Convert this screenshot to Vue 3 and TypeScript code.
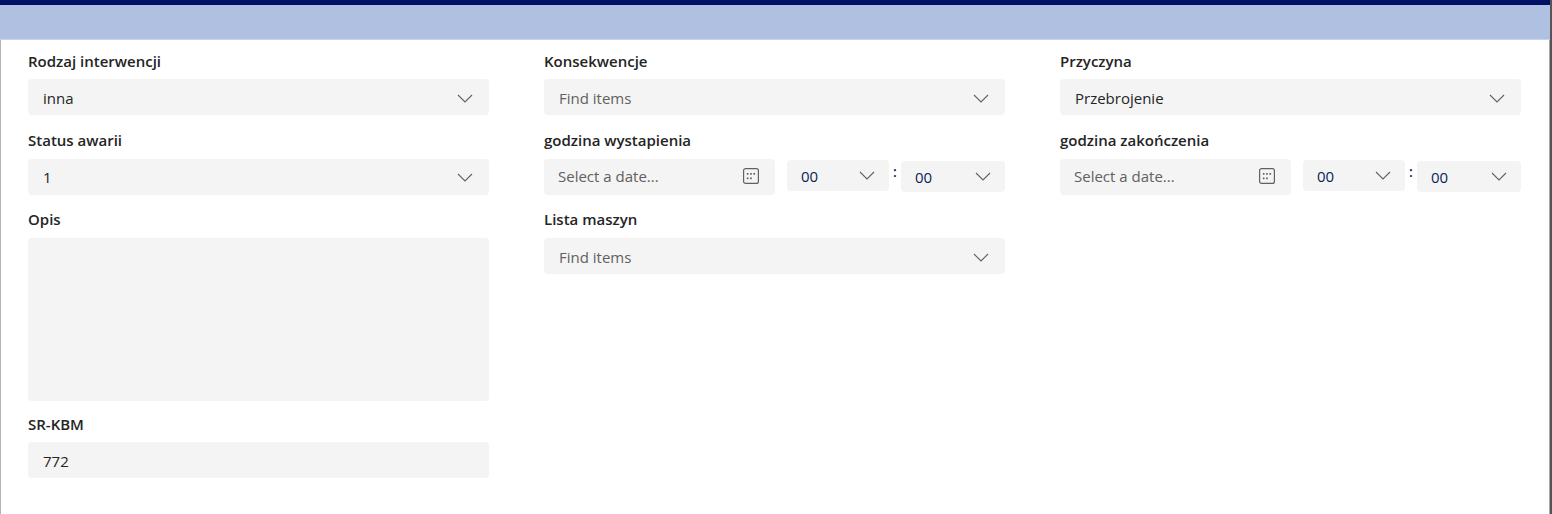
<script setup lang="ts">
interface Field {
  label: string
  value?: string
  placeholder?: string
}

const firstRow: Field[] = [
  { label: 'Rodzaj interwencji', value: 'inna' },
  { label: 'Konsekwencje', placeholder: 'Find items' },
  { label: 'Przyczyna', value: 'Przebrojenie' }
]
</script>

<template>
  <div class="page">
    <header class="topbar" />
    <main class="form">
      <div class="column">
        <div class="field">
          <label>{{ firstRow[0].label }}</label>
          <div class="box low">
            <span class="value">{{ firstRow[0].value }}</span>
            <svg class="chevron" viewBox="0 0 16 9"><path d="M1 1l7 7 7-7" /></svg>
          </div>
        </div>
        <div class="field second">
          <label class="raised">Status awarii</label>
          <div class="box">
            <span class="value">1</span>
            <svg class="chevron" viewBox="0 0 16 9"><path d="M1 1l7 7 7-7" /></svg>
          </div>
        </div>
        <div class="field opis">
          <label class="raised">Opis</label>
          <div class="box textarea" />
        </div>
        <div class="field">
          <label>SR-KBM</label>
          <div class="box low">
            <span class="value">772</span>
          </div>
        </div>
      </div>

      <div class="column">
        <div class="field">
          <label>{{ firstRow[1].label }}</label>
          <div class="box low">
            <span class="placeholder">{{ firstRow[1].placeholder }}</span>
            <svg class="chevron" viewBox="0 0 16 9"><path d="M1 1l7 7 7-7" /></svg>
          </div>
        </div>
        <div class="field second">
          <label class="raised">godzina wystapienia</label>
          <div class="datetime">
            <div class="box date">
              <span class="placeholder">Select a date...</span>
              <svg class="calendar" viewBox="0 0 16 16">
                <rect x="0.6" y="0.6" width="14.8" height="14.8" rx="2" />
                <g class="dots">
                  <rect x="3.8" y="5" width="1.7" height="1.7" />
                  <rect x="7.1" y="5" width="1.7" height="1.7" />
                  <rect x="10.4" y="5" width="1.7" height="1.7" />
                  <rect x="3.8" y="9.5" width="1.7" height="1.7" />
                  <rect x="7.1" y="9.5" width="1.7" height="1.7" />
                </g>
              </svg>
            </div>
            <div class="box time hour">
              <span class="value num">00</span>
              <svg class="chevron" viewBox="0 0 16 9"><path d="M1 1l7 7 7-7" /></svg>
            </div>
            <span class="colon">:</span>
            <div class="box time minute">
              <span class="value num">00</span>
              <svg class="chevron" viewBox="0 0 16 9"><path d="M1 1l7 7 7-7" /></svg>
            </div>
          </div>
        </div>
        <div class="field">
          <label class="raised">Lista maszyn</label>
          <div class="box low">
            <span class="placeholder">Find items</span>
            <svg class="chevron" viewBox="0 0 16 9"><path d="M1 1l7 7 7-7" /></svg>
          </div>
        </div>
      </div>

      <div class="column">
        <div class="field">
          <label>{{ firstRow[2].label }}</label>
          <div class="box low">
            <span class="value">{{ firstRow[2].value }}</span>
            <svg class="chevron" viewBox="0 0 16 9"><path d="M1 1l7 7 7-7" /></svg>
          </div>
        </div>
        <div class="field second">
          <label class="raised">godzina zakończenia</label>
          <div class="datetime">
            <div class="box date">
              <span class="placeholder">Select a date...</span>
              <svg class="calendar" viewBox="0 0 16 16">
                <rect x="0.6" y="0.6" width="14.8" height="14.8" rx="2" />
                <g class="dots">
                  <rect x="3.8" y="5" width="1.7" height="1.7" />
                  <rect x="7.1" y="5" width="1.7" height="1.7" />
                  <rect x="10.4" y="5" width="1.7" height="1.7" />
                  <rect x="3.8" y="9.5" width="1.7" height="1.7" />
                  <rect x="7.1" y="9.5" width="1.7" height="1.7" />
                </g>
              </svg>
            </div>
            <div class="box time hour">
              <span class="value num">00</span>
              <svg class="chevron" viewBox="0 0 16 9"><path d="M1 1l7 7 7-7" /></svg>
            </div>
            <span class="colon">:</span>
            <div class="box time minute">
              <span class="value num">00</span>
              <svg class="chevron" viewBox="0 0 16 9"><path d="M1 1l7 7 7-7" /></svg>
            </div>
          </div>
        </div>
      </div>
    </main>
  </div>
</template>

<style>
html,
body {
  margin: 0;
  background: #fff;
}
</style>

<style scoped>
.page {
  position: relative;
  box-sizing: border-box;
  display: flex;
  flex-direction: column;
  width: 1552px;
  height: 514px;
  overflow: hidden;
  background: #fff;
  border-right: 2px solid #555;
  font-family: 'Open Sans', 'Noto Sans', sans-serif;
  color: #242424;
}

/* darker top of the window edge */
.page::after {
  content: '';
  position: absolute;
  top: 0;
  right: -2px;
  width: 2px;
  height: 16px;
  background: #222;
}

.topbar {
  flex: none;
  height: 34px;
  background: #b0c0e0;
  border-top: 5px solid #001166;
  border-bottom: 1px solid #c9d3ea;
}

.form {
  flex: 1;
  display: grid;
  grid-template-columns: repeat(3, 461px);
  column-gap: 55px;
  padding: 10px 0 0 27px;
  border-left: 1px solid #b3b3b3;
  border-right: 1px solid #a6a6a6;
}

.column {
  display: flex;
  flex-direction: column;
}

.field {
  display: flex;
  flex-direction: column;
  margin-bottom: 15px;
}

.second {
  margin-bottom: 14px;
}

.opis {
  margin-bottom: 12px;
}

label {
  height: 23px;
  margin-bottom: 6px;
  font-size: 15px;
  line-height: 23px;
  font-weight: 600;
  white-space: nowrap;
}

label.raised {
  height: 22px;
  margin-bottom: 7px;
  line-height: 21px;
}

.box {
  box-sizing: border-box;
  display: flex;
  align-items: center;
  justify-content: space-between;
  height: 36px;
  padding: 0 16px 0 15px;
  background: #f4f4f4;
  border-radius: 4px;
  font-size: 15px;
}

.low {
  padding-top: 2px;
}

.textarea {
  height: 163px;
}

.value {
  color: #242424;
}

.num {
  color: #0a1f55;
}

.placeholder {
  color: #616161;
}

.chevron {
  width: 16px;
  height: 9px;
  fill: none;
  stroke: #616161;
  stroke-width: 1.1;
}

.datetime {
  display: flex;
  align-items: flex-start;
}

.date {
  width: 231px;
  padding: 0 16px 2px 14px;
}

.calendar {
  width: 16px;
  height: 16px;
  fill: none;
  stroke: #616161;
  stroke-width: 1.2;
}

.dots rect {
  fill: #616161;
  stroke: none;
}

.time {
  height: 31px;
  padding: 0 14px;
}

.hour {
  width: 102px;
  margin: 1px 0 0 12px;
}

.minute {
  width: 104px;
  margin-top: 2px;
}

.colon {
  width: 12px;
  text-align: center;
  font-size: 14px;
  line-height: 20px;
  font-weight: 600;
  color: #0a1f55;
  margin-top: 3px;
}
</style>
